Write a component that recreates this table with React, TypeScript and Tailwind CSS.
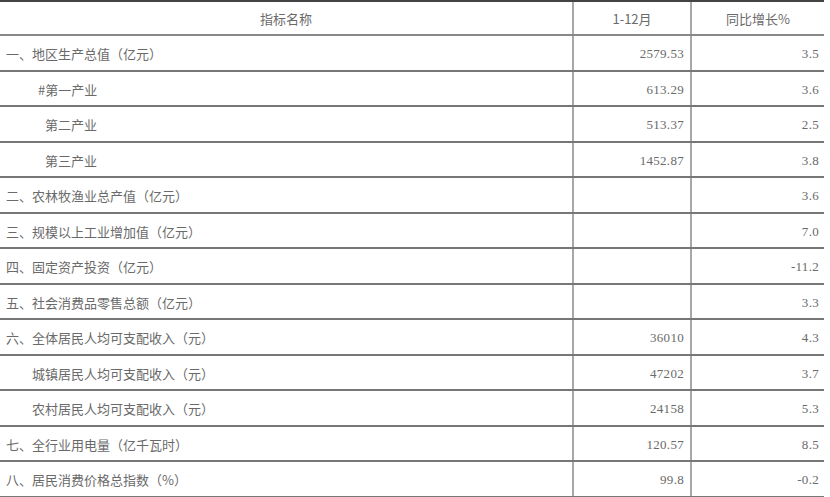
const rows = [
  { name: '一、地区生产总值（亿元）', indent: 'pl-[6px]', value: '2579.53', rate: '3.5' },
  { name: '#第一产业', indent: 'pl-[38px]', value: '613.29', rate: '3.6' },
  { name: '第二产业', indent: 'pl-[45px]', value: '513.37', rate: '2.5' },
  { name: '第三产业', indent: 'pl-[45px]', value: '1452.87', rate: '3.8' },
  { name: '二、农林牧渔业总产值（亿元）', indent: 'pl-[6px]', value: '', rate: '3.6' },
  { name: '三、规模以上工业增加值（亿元）', indent: 'pl-[6px]', value: '', rate: '7.0' },
  { name: '四、固定资产投资（亿元）', indent: 'pl-[6px]', value: '', rate: '-11.2' },
  { name: '五、社会消费品零售总额（亿元）', indent: 'pl-[6px]', value: '', rate: '3.3' },
  { name: '六、全体居民人均可支配收入（元）', indent: 'pl-[6px]', value: '36010', rate: '4.3' },
  { name: '城镇居民人均可支配收入（元）', indent: 'pl-[32px]', value: '47202', rate: '3.7' },
  { name: '农村居民人均可支配收入（元）', indent: 'pl-[32px]', value: '24158', rate: '5.3' },
  { name: '七、全行业用电量（亿千瓦时）', indent: 'pl-[6px]', value: '120.57', rate: '8.5' },
  { name: '八、居民消费价格总指数（%）', indent: 'pl-[6px]', value: '99.8', rate: '-0.2' },
]

const cjk = "font-['Noto_Sans_CJK_SC',sans-serif]"
const num = "font-['Liberation_Serif','Noto_Sans_CJK_SC',serif]"

export default function App() {
  return (
    <div className="w-[830px] h-[497px] bg-white overflow-hidden text-[13px] text-[#6a6a6a]">
      <div className="w-[824px] border-t-2 border-[#444]">
        <div className="grid grid-cols-[572px_118px_134px] h-[34px] border-b-2 border-[#888]">
          <div className={`${cjk} flex items-center justify-center pt-[2px]`}>指标名称</div>
          <div className={`${cjk} flex items-center justify-center pt-[2px] border-l-2 border-[#a8a8a8]`}>1-12月</div>
          <div className={`${cjk} flex items-center justify-center pt-[2px] border-l-2 border-[#a8a8a8]`}>同比增长%</div>
        </div>
        {rows.map((r) => (
          <div key={r.name} className="grid grid-cols-[572px_118px_134px] h-[35.5px] border-b-2 border-[#777]">
            <div className={`${cjk} ${r.indent} flex items-center pt-[2px]`}>{r.name}</div>
            <div className={`${num} flex items-center justify-end pt-[2px] pr-[6px] border-l-2 border-[#a8a8a8] tracking-[0.3px]`}>
              {r.value}
            </div>
            <div className={`${num} flex items-center justify-end pt-[2px] pr-[5px] border-l-2 border-[#a8a8a8] tracking-[0.3px]`}>
              {r.rate}
            </div>
          </div>
        ))}
      </div>
    </div>
  )
}
